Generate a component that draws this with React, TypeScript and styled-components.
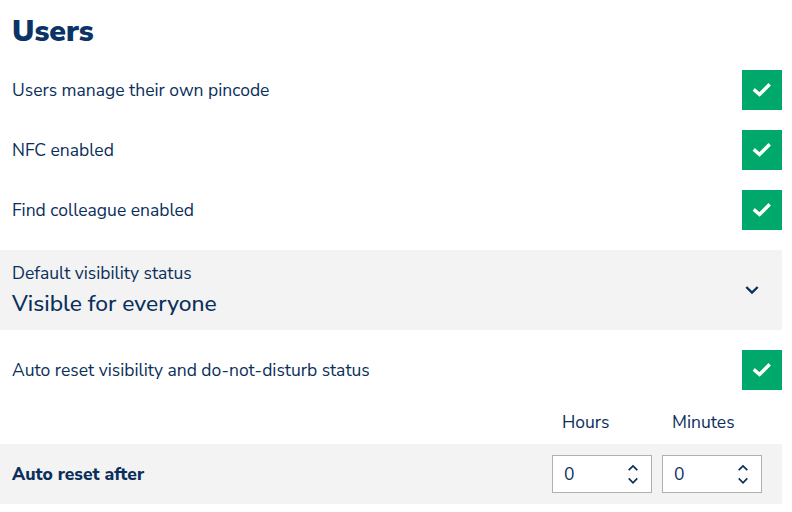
import React from "react";
import styled, { createGlobalStyle } from "styled-components";

const Global = createGlobalStyle`
  html, body { margin: 0; padding: 0; background: #fff; }
  body { font-family: "Nunito Sans", Lato, "Open Sans", sans-serif; color: #0b2f5b; }
`;

const Page = styled.div`
  width: 782px;
  display: flex;
  flex-direction: column;
`;

const Title = styled.h1`
  margin: 0;
  height: 60px;
  padding: 12px 0 0 12px;
  box-sizing: border-box;
  font-size: 30px;
  font-weight: 900;
  color: #0b3466;
  line-height: 40px;
`;

const Row = styled.div<{ $grey?: boolean; $h?: number; $mt?: number }>`
  display: flex;
  align-items: center;
  justify-content: space-between;
  height: ${(p) => p.$h ?? 60}px;
  margin-top: ${(p) => p.$mt ?? 0}px;
  padding-left: 12px;
  background: ${(p) => (p.$grey ? "#f3f3f3" : "transparent")};
`;

const Label = styled.span<{ $bold?: boolean }>`
  font-size: 17.5px;
  font-weight: ${(p) => (p.$bold ? 800 : 400)};
  color: #0b2f5b;
`;

const Check = styled.div`
  width: 40px;
  height: 40px;
  background: #00a86b;
  display: flex;
  align-items: center;
  justify-content: center;
`;

const SelectText = styled.div`
  display: flex;
  flex-direction: column;
  gap: 3px;
`;

const SmallLabel = styled.span`
  font-size: 17.5px;
  color: #0b2f5b;
`;

const Value = styled.span`
  font-size: 22.8px;
  font-weight: 500;
  color: #0b2f5b;
`;

const ChevronBox = styled.div`
  width: 60px;
  display: flex;
  justify-content: center;
`;

const HeadRow = styled.div`
  display: flex;
  justify-content: flex-end;
  gap: 10px;
  height: 44px;
  align-items: center;
  padding-right: 20px;
  box-sizing: border-box;
`;

const HeadLabel = styled.span`
  width: 100px;
  box-sizing: border-box;
  padding-left: 10px;
  font-size: 17.5px;
  color: #0b2f5b;
`;

const Inputs = styled.div`
  display: flex;
  gap: 10px;
  padding-right: 20px;
`;

const NumBox = styled.div`
  width: 100px;
  height: 38px;
  box-sizing: border-box;
  border: 1px solid #b0b0b0;
  background: #fff;
  display: flex;
  align-items: center;
  justify-content: space-between;
  padding: 0 12px 0 11px;
  font-size: 17.5px;
  color: #0b2f5b;
`;

const Spin = styled.div`
  display: flex;
  flex-direction: column;
  gap: 6px;
`;

const CheckIcon = () => (
  <svg width="20" height="16" viewBox="0 0 20 16">
    <path d="M3 8.5 L7.5 12.5 L16.5 3.5" fill="none" stroke="#fff" strokeWidth="3.4" strokeLinecap="square" />
  </svg>
);

const Chevron = ({ up, size = 14 }: { up?: boolean; size?: number }) => (
  <svg width={size} height={size * 0.6} viewBox="0 0 14 8">
    <path
      d={up ? "M2 7 L7 2 L12 7" : "M2 1.5 L7 6.5 L12 1.5"}
      fill="none"
      stroke="#0b2f5b"
      strokeWidth="2"
    />
  </svg>
);

const CheckRow = ({ label, mt }: { label: string; mt?: number }) => (
  <Row $mt={mt}>
    <Label>{label}</Label>
    <Check>
      <CheckIcon />
    </Check>
  </Row>
);

const NumInput = ({ value }: { value: string }) => (
  <NumBox>
    <span>{value}</span>
    <Spin>
      <Chevron up size={12} />
      <Chevron size={12} />
    </Spin>
  </NumBox>
);

export default function App() {
  return (
    <>
      <Global />
      <Page>
        <Title>Users</Title>
        <CheckRow label="Users manage their own pincode" />
        <CheckRow label="NFC enabled" />
        <CheckRow label="Find colleague enabled" />
        <Row $grey $h={80} $mt={10}>
          <SelectText>
            <SmallLabel>Default visibility status</SmallLabel>
            <Value>Visible for everyone</Value>
          </SelectText>
          <ChevronBox>
            <Chevron size={16} />
          </ChevronBox>
        </Row>
        <CheckRow label="Auto reset visibility and do-not-disturb status" mt={10} />
        <HeadRow>
          <HeadLabel>Hours</HeadLabel>
          <HeadLabel>Minutes</HeadLabel>
        </HeadRow>
        <Row $grey>
          <Label $bold>Auto reset after</Label>
          <Inputs>
            <NumInput value="0" />
            <NumInput value="0" />
          </Inputs>
        </Row>
      </Page>
    </>
  );
}
